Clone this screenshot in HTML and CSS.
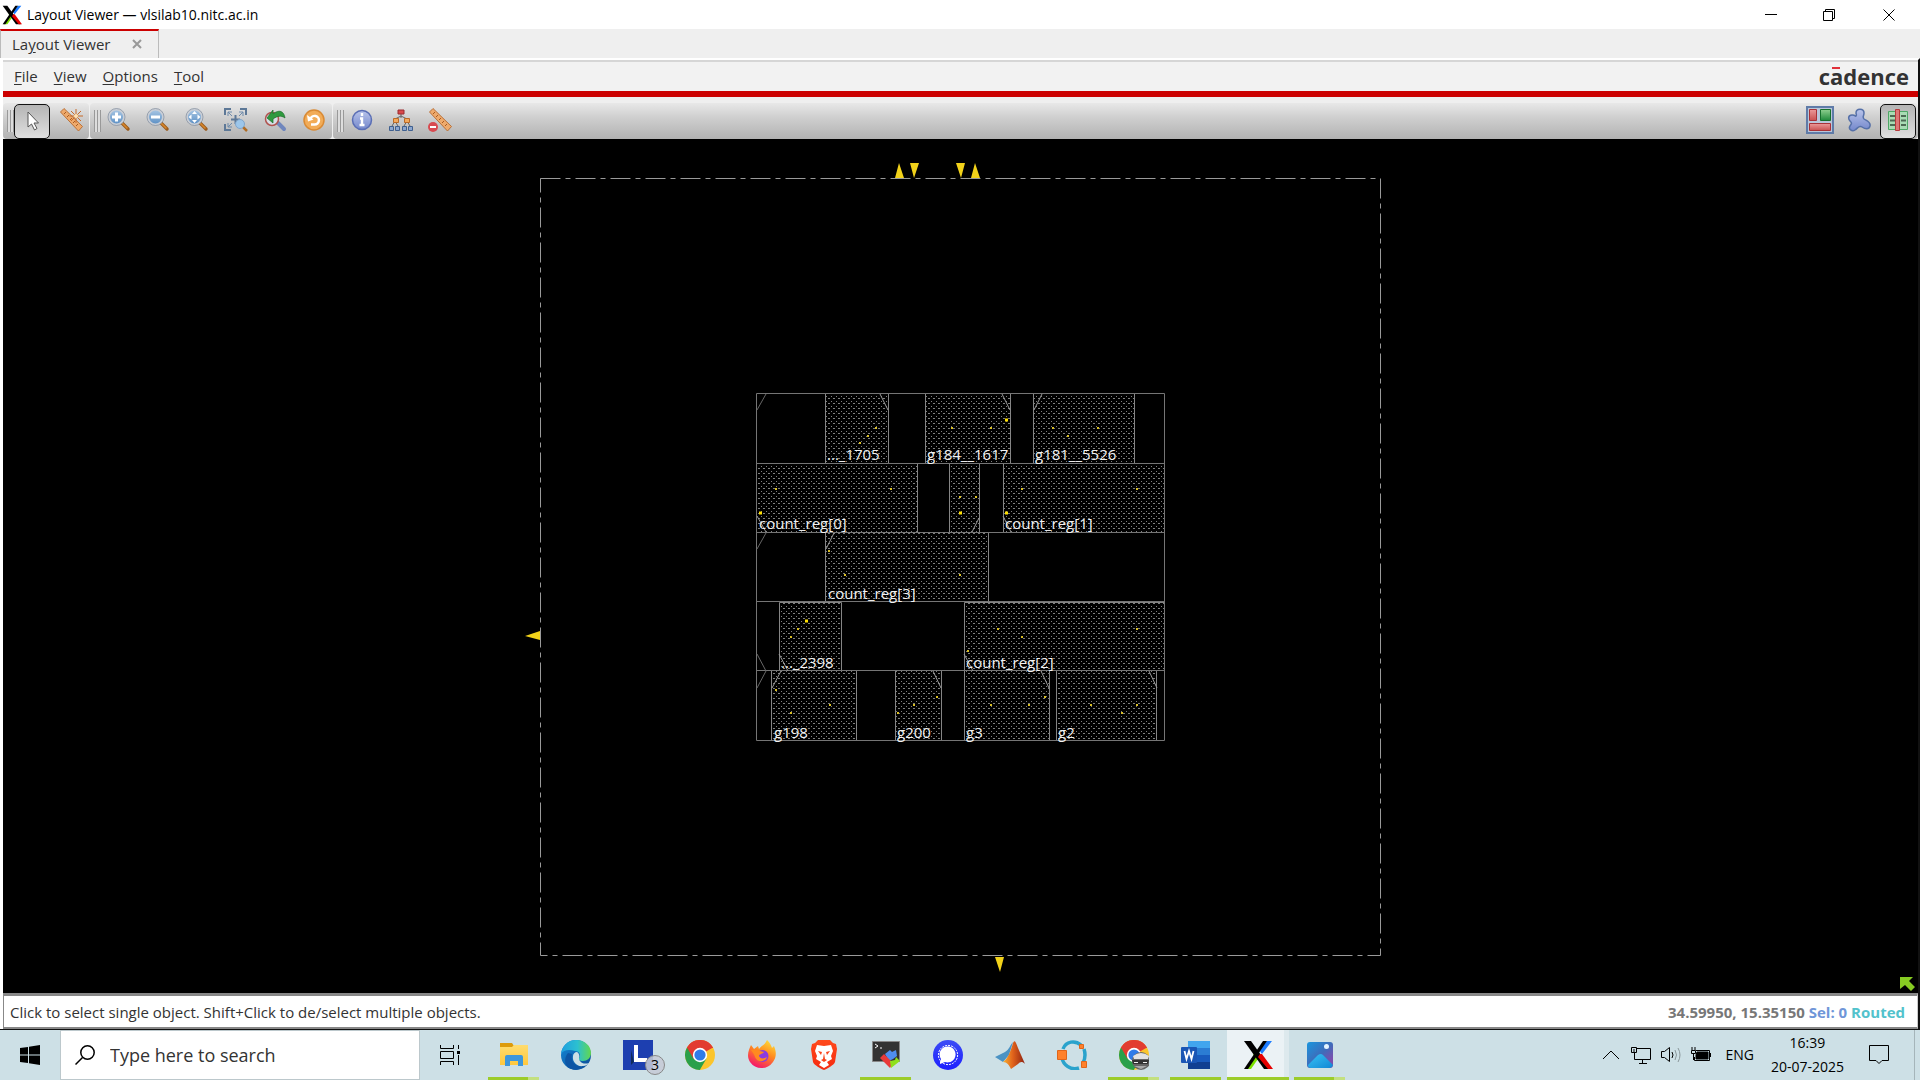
FILE: index.html
```html
<!DOCTYPE html>
<html lang="en">
<head>
<meta charset="utf-8">
<title>Layout Viewer — vlsilab10.nitc.ac.in</title>
<link rel="stylesheet" href="styles.css">
</head>
<body>
<svg class="defs" aria-hidden="true">
  <defs>
    <linearGradient id="lens" x1="0" y1="0" x2="0" y2="1"><stop offset="0" stop-color="#a9c7e4"/><stop offset="1" stop-color="#5b8fc4"/></linearGradient>
    <linearGradient id="blueball" x1="0" y1="0" x2="0" y2="1"><stop offset="0" stop-color="#b9c4ea"/><stop offset="1" stop-color="#7488cc"/></linearGradient>
    <linearGradient id="green" x1="0" y1="0" x2="0" y2="1"><stop offset="0" stop-color="#8fd08f"/><stop offset="1" stop-color="#1f8a3b"/></linearGradient>
    <linearGradient id="red" x1="0" y1="0" x2="0" y2="1"><stop offset="0" stop-color="#eb9a9a"/><stop offset="1" stop-color="#c95050"/></linearGradient>
    <linearGradient id="edgeTop" x1="0" y1="0" x2="1" y2="0"><stop offset="0" stop-color="#1f9fe0"/><stop offset=".55" stop-color="#2cc0d0"/><stop offset="1" stop-color="#62d84e"/></linearGradient>
    <linearGradient id="edgeLow" x1="0" y1="0" x2="1" y2="1"><stop offset="0" stop-color="#1488d8"/><stop offset="1" stop-color="#0c4a94"/></linearGradient>
    <linearGradient id="fox" x1=".8" y1="0" x2=".3" y2="1"><stop offset="0" stop-color="#ffe03a"/><stop offset=".45" stop-color="#ff8a1f"/><stop offset="1" stop-color="#f4126e"/></linearGradient>
    <linearGradient id="brave" x1="0" y1="0" x2="0" y2="1"><stop offset="0" stop-color="#ff4a1c"/><stop offset="1" stop-color="#f52a10"/></linearGradient>
    <linearGradient id="signal" x1="0" y1="0" x2="0" y2="1"><stop offset="0" stop-color="#3c4cf5"/><stop offset="1" stop-color="#1d20ff"/></linearGradient>
    <linearGradient id="matlab" x1="0" y1="0" x2="1" y2="0"><stop offset="0" stop-color="#f7b032"/><stop offset=".45" stop-color="#e0621b"/><stop offset="1" stop-color="#8e2210"/></linearGradient>
    <linearGradient id="photo" x1="0" y1="0" x2="1" y2="1"><stop offset="0" stop-color="#1a96de"/><stop offset=".5" stop-color="#3e6cba"/><stop offset=".8" stop-color="#7a4fae"/></linearGradient>
    <linearGradient id="hill" x1="0" y1="0" x2="1" y2="1"><stop offset="0" stop-color="#37c2f5"/><stop offset="1" stop-color="#1187d4"/></linearGradient>
    <linearGradient id="folder" x1="0" y1="0" x2="0" y2="1"><stop offset="0" stop-color="#ffdc6e"/><stop offset="1" stop-color="#ffc83d"/></linearGradient>
    <symbol id="xlogo" viewBox="0 0 30 30">
      <path d="M24 1h5L19 14l-3-4z" fill="#1c7cff"/>
      <path d="M8 4l6 9-3 4z" fill="#7be000"/>
      <path d="M11 15l4 4-7 10H3z" fill="#7be000"/>
      <path d="M1 1h7l20 28h-7z" fill="#000"/>
      <path d="M17 14h2l11 15h-5L15 17z" fill="#e60000"/>
      <path d="M20 1h4L5 29H1z" fill="#000"/>
    </symbol>
    <symbol id="mag" viewBox="0 0 24 24">
      <path d="M14 14l7 7" stroke="#9a5a1c" stroke-width="3.4" stroke-linecap="round"/>
      <path d="M14 14l6 6" stroke="#d8872c" stroke-width="1.6" stroke-linecap="round"/>
      <circle cx="9.500" cy="9" r="7.500" fill="url(#lens)" stroke="#c9ced6" stroke-width="2"/>
      <circle cx="9.500" cy="9" r="8.500" fill="none" stroke="#7f8b9c" stroke-width=".7"/>
    </symbol>
    <symbol id="ruler" viewBox="0 0 24 24">
      <path d="M1.500 4l3.500-3.500 18.500 18-4 4.500z" fill="#eeaa6c" stroke="#b9713a"/>
      <path d="M7 4l-2 2M10 7l-2 2M13 10l-2 2M16 13l-2 2M19 16l-2 2" stroke="#a85a20"/>
    </symbol>
    <symbol id="chrome" viewBox="0 0 30 30">
      <circle cx="15" cy="15" r="15" fill="#fbc52c"/>
      <path d="M15 15L2 7.500A15 15 0 0 1 28 7.500z" fill="#e23c30"/>
      <path d="M2 7.500A15 15 0 0 0 14.800 30L21.500 18.500 15 15z" fill="#2aa04a"/>
      <path d="M2 7.500l6.500 11.200L15 15V8h13A15 15 0 0 0 2 7.500z" fill="#e23c30"/>
      <circle cx="15" cy="15" r="7.200" fill="#fff"/><circle cx="15" cy="15" r="5.600" fill="#2f7be8"/>
    </symbol>
  </defs>
</svg>

<header class="titlebar">
  <svg class="app-icon" viewBox="0 0 30 30"><use href="#xlogo"/></svg>
  <h1 class="title">Layout Viewer — vlsilab10.nitc.ac.in</h1>
  <div class="window-buttons">
    <button type="button" aria-label="Minimize"><svg viewBox="0 0 12 12"><path d="M0 5.500h12"/></svg></button>
    <button type="button" aria-label="Restore"><svg viewBox="0 0 12 12"><path d="M.5 2.500h9v9h-9zM2.500 2.500v-2h9v9h-2"/></svg></button>
    <button type="button" aria-label="Close"><svg viewBox="0 0 12 12"><path d="M.5.5l11 11M11.500.5l-11 11"/></svg></button>
  </div>
</header>

<div class="tabs">
  <div class="tab"><span>La<u>y</u>out Viewer</span><button type="button" aria-label="Close tab"><svg viewBox="0 0 10 10"><path d="M1 1l8 8M9 1l-8 8"/></svg></button></div>
</div>

<main class="window">
  <div class="menubar">
    <nav class="menus">
      <button type="button"><u>F</u>ile</button>
      <button type="button"><u>V</u>iew</button>
      <button type="button"><u>O</u>ptions</button>
      <button type="button"><u>T</u>ool</button>
    </nav>
    <span class="brand">c<span class="macron">a</span>dence</span>
  </div>

  <div class="toolbar">
    <div class="tool-group">
      <span class="grip"></span>
      <button type="button" class="tool pressed" aria-label="Select"><svg viewBox="0 0 24 24"><path d="M8 4v15l3.500-3 3 6 2.500-1.500-3-5.500h4.500z" fill="#fff" stroke="#555"/></svg></button>
      <button type="button" class="tool" aria-label="Ruler"><svg viewBox="0 0 24 24"><use href="#ruler"/><path d="M17 1v14M10.500 8H24M12 3l10 10M22 3L12 13" stroke="#c76a2a"/><circle cx="17" cy="8" r="2" fill="#ffe2b0"/></svg></button>
    </div>
    <div class="tool-group">
      <span class="grip"></span>
      <button type="button" class="tool" aria-label="Zoom in"><svg viewBox="0 0 24 24"><use href="#mag"/><path d="M9.500 4.500v9M5 9h9" stroke="#fff" stroke-width="3"/></svg></button>
      <button type="button" class="tool" aria-label="Zoom out"><svg viewBox="0 0 24 24"><use href="#mag"/><path d="M5 9h9" stroke="#fff" stroke-width="3"/></svg></button>
      <button type="button" class="tool" aria-label="Zoom fit"><svg viewBox="0 0 24 24"><use href="#mag"/><path d="M9.500 3l2.500 3H7zM9.500 15l2.500-3H7zM3.500 9l3-2.500v5zM15.500 9l-3-2.500v5z" fill="#fff"/></svg></button>
      <button type="button" class="tool" aria-label="Zoom to selected"><svg viewBox="0 0 24 24"><path d="M1 7V1h6M16 1h6v6M1 16v6h6M11.500 7v9M7 11.500h9" fill="none" stroke="#5d7897" stroke-width="2"/><path d="M4 4l4 4M19 4l-4 4M4 19l4-4M4 8V4h4M15 4h4v4M4 15v4h4" fill="none" stroke="#6f8bab"/><path d="M18 18l5 5" stroke="#b06c24" stroke-width="2.500"/><circle cx="16" cy="16" r="4.500" fill="#9cc6ea" stroke="#7fa5cb"/></svg></button>
      <button type="button" class="tool" aria-label="Zoom previous"><svg viewBox="0 0 24 24"><path d="M14 14l7 7" stroke="#6f86bd" stroke-width="4" stroke-linecap="round"/><circle cx="9" cy="11" r="6.500" fill="#d7dee6" stroke="#b0534f" stroke-width="1.500"/><path d="M4 10l6-8v4c6-5 11-3 12 4-4-3-8-2-12 1v4z" fill="#2f9a3f" stroke="#1c6b2a" stroke-width=".7"/></svg></button>
      <button type="button" class="tool" aria-label="Redraw"><svg viewBox="0 0 24 24"><circle cx="12" cy="12" r="10" fill="#f2ac58" stroke="#d98a34" stroke-width="1.500"/><path d="M9 16.500h3.500a4.300 4.300 0 1 0-4-5.500" fill="none" stroke="#fff" stroke-width="2.500"/><path d="M5 7l1 6.500 5.500-2z" fill="#fff"/></svg></button>
    </div>
    <div class="tool-group wide">
      <span class="grip"></span>
      <button type="button" class="tool" aria-label="Attributes"><svg viewBox="0 0 24 24"><circle cx="12" cy="12" r="9.500" fill="url(#blueball)" stroke="#5a6eb5" stroke-width="1.500"/><path d="M12 5v3M10 10.500h2v6M9.500 17h5" stroke="#fff" stroke-width="2.400" fill="none"/></svg></button>
      <button type="button" class="tool" aria-label="Hierarchy"><svg viewBox="0 0 24 24"><path d="M12 5v5M6 11l6-3 6 3M3 18l3-5 3 5M15 18l3-5 3 5" fill="none" stroke="#666"/><path d="M9 2h6v4H9z" fill="#d9494b" stroke="#9a2c30"/><path d="M4.500 10.500h5v4h-5zM15.500 10.500h5v4h-5z" fill="#f2a95c" stroke="#bb6a26"/><path d="M.5 18.500h4v4h-4zM6.500 18.500h4v4h-4zM13.500 18.500h4v4h-4zM19.500 18.500h4v4h-4z" fill="#8ba6cf" stroke="#40608f"/></svg></button>
      <button type="button" class="tool" aria-label="Clear rulers"><svg viewBox="0 0 24 24"><use href="#ruler"/><circle cx="5" cy="19" r="5" fill="#d84a50"/><path d="M2 19h6" stroke="#fff" stroke-width="2"/></svg></button>
      <div class="views">
        <button type="button" class="tool" aria-label="Floorplan view"><svg class="big" viewBox="0 0 28 28"><path d="M1 1h26v26H1z" fill="#b9c6da" stroke="#5f7ba8" stroke-width="2"/><path d="M3.500 3.500h7v11h-7z" fill="url(#red)" stroke="#a83238"/><path d="M14.500 3.500h10v11h-10z" fill="url(#green)" stroke="#16702c"/><path d="M3.500 17.500h21v7h-21z" fill="url(#red)" stroke="#a83238"/></svg></button>
        <button type="button" class="tool" aria-label="Amoeba view"><svg viewBox="0 0 24 24"><path d="M9 5c0-5 8-5 8 0 0 3-2 4 0 6 3 2 7 3 6 7s-5 3-8 1-4 1-7 3-7-1-5-4 2-3 0-5-2-6 2-6 3 2 4 1 0-2 0-3z" fill="url(#blueball)" stroke="#5570a8" stroke-width="1.500"/></svg></button>
        <button type="button" class="tool pressed" aria-label="Physical view"><svg viewBox="0 0 24 24"><path d="M2.500 3.500h19v18h-19z" fill="#a9dcb4" stroke="#4fa766"/><path d="M4 8h5M4 12.500h5M4 17h5M15 8h5M15 12.500h5M15 17h5" stroke="#4d6b54" stroke-width="2"/><path d="M9.500 1.500h4v21h-4z" fill="#dd7777" stroke="#b73a3c"/></svg></button>
      </div>
    </div>
  </div>

  <svg class="canvas" viewBox="3 139 1915 854" role="img" aria-label="Placed cell layout">
    <defs>
      <pattern id="stipple" width="5" height="5" patternUnits="userSpaceOnUse"><path d="M1 1h1v1H1zM3 3h2v1H3z" fill="#808080"/></pattern>
    </defs>
    <rect class="die" x="540.500" y="178.500" width="840" height="777"/>
    <path class="port" d="M895 178l4-15 5 15zM910 163h9l-5 15zM956 163h9l-4 15zM971 178l4-15 5 15zM525 636l15-5v9zM995 957h9l-4 15z"/>
    <path class="cell" d="M825.500 393.500h63v70h-63zM925.500 393.500h85v70h-85zM1033.500 393.500h101v70h-101z
      M756.500 463.500h161v69h-161zM949.500 463.500h30v69h-30zM1003.500 463.500h161v69h-161z
      M825.500 532.500h163v69h-163z
      M779.500 602.500h62v68h-62zM964.500 602.500h200v68h-200z
      M771.500 670.500h85v70h-85zM895.500 670.500h46v70h-46zM964.500 670.500h85v70h-85zM1056.500 670.500h100v70h-100z"/>
    <path class="row" d="M756.500 393.500h408v347h-408zM756 463.500h408M756 532.500h408M756 601.500h408M756 670.500h408"/>
    <path class="mark dim" d="M757 410l9-16M766 533l-9 16M757 654l9 17-9 17"/>
    <path class="mark" d="M880 394l8 16M1002 394l8 16M1042 394l-8 16M757 516l9 16M979 518l-7 14M1003 516l8 16M834 533l-8 16M779 654l9 17M964 654l9 17M781 671l-9 17M933 671l8 17M1041 671l8 17M1149 671l8 17"/>
    <path class="pin" d="M859 443h2M867 436h2M875 428h2M951 428h2M990 428h2M1052 428h2M1067 436h2M1097 428h2M775 489h2M890 489h2M959 497h2M975 497h2M1021 489h2M1136 489h2M828 551h2M844 575h2M959 575h2M797 629h2M790 637h2M997 629h2M1021 637h2M1136 629h2M967 651h2M775 690h2M829 705h2M790 713h2M936 697h2M913 705h2M897 713h2M1044 697h2M990 705h2M1028 705h2M1090 705h2M1136 705h2M1121 713h2"/>
    <path class="pin large" d="M1005 420h3M759 513h3M959 513h3M1005 513h3M805 621h3"/>
    <g class="labels">
      <text x="827" y="460">..._1705</text><text x="927" y="460">g184__1617</text><text x="1035" y="460">g181__5526</text>
      <text x="759" y="529">count_reg[0]</text><text x="1005" y="529">count_reg[1]</text>
      <text x="828" y="599">count_reg[3]</text>
      <text x="781" y="668">..._2398</text><text x="966" y="668">count_reg[2]</text>
      <text x="774" y="738">g198</text><text x="897" y="738">g200</text><text x="966" y="738">g3</text><text x="1058" y="738">g2</text>
    </g>
    <path class="corner" d="M1900 977h13l-4 4 6 6-4 4-6-6-5 4z"/>
  </svg>

  <footer class="status">
    <span>Click to select single object. Shift+Click to de/select multiple objects.</span>
    <strong class="coords">34.59950, 15.35150 <span class="sel">Sel: 0</span> <span class="routed">Routed</span></strong>
  </footer>
</main>

<div class="taskbar">
  <button type="button" class="start" aria-label="Start"><svg viewBox="0 0 20 20"><path d="M0 3l8-1v7.500H0zM9 1.800L20 0v9.500H9zM0 10.500h8V18l-8-1zM9 10.500h11V20L9 18.200z"/></svg></button>
  <label class="search"><svg viewBox="0 0 20 20"><circle cx="12.500" cy="7.500" r="6.700"/><path d="M7.500 12.500L.5 19.500"/></svg><input type="text" placeholder="Type here to search" aria-label="Search"></label>
  <div class="apps">
    <button type="button" class="view" aria-label="Task view"><svg viewBox="0 0 20 20"><path d="M.5 0v3.500h13V0M.5 20v-3.500h13V20M.5 6.500h13v7H.5zM18.500 0v4M18.500 10v10" fill="none" stroke="#000"/><path d="M17 6h3v3h-3z"/></svg></button>
    <button type="button" class="app open many" aria-label="File Explorer"><svg viewBox="0 0 30 30"><path d="M1 3h12l2 3-2 3H1z" fill="#dd9b0c"/><path d="M1 7h12l2-2h14v20H1z" fill="url(#folder)"/><path d="M6 26V17q0-2 2-2h14q2 0 2 2v9h-5v-5h-8v5z" fill="#3d97dc"/></svg></button>
    <button type="button" class="app" aria-label="Edge"><svg viewBox="0 0 30 30"><circle cx="15" cy="15" r="15" fill="url(#edgeLow)"/><path d="M0 14C1 6 7 0 15 0c9 0 15 6 15 13 0 5-4 8-8 8-3 0-5-1-4-3 2-2 1-7-4-7C8 9 2 10 0 14z" fill="url(#edgeTop)"/><path d="M12 16c-1 6 4 11 10 10 3 0 5-2 6-3-3 1-7 1-9-2-1-1-1-2-1-3 1-2 0-5-2-6-2 0-4 2-4 4z" fill="#cde0e6"/><path d="M11 14c-2 8 4 14 11 13-3 3-9 4-14 1S3 18 7 13z" fill="#0d55a5"/></svg></button>
    <button type="button" class="app" aria-label="LogMeIn"><svg viewBox="0 0 30 30"><path d="M0 0h30v30H0z" fill="#1d3fb0"/><path d="M11 22l-3 3V10z" fill="#0f2b5c"/><path d="M11 5h4v13h9v4H11z" fill="#fff"/></svg><span class="badge">3</span></button>
    <button type="button" class="app" aria-label="Chrome"><svg viewBox="0 0 30 30"><use href="#chrome"/></svg></button>
    <button type="button" class="app" aria-label="Firefox"><svg viewBox="0 0 30 30"><path d="M4 5l3 4 4-3 1 3c2-3 6-4 8-9 3 3 4 5 5 8l2-2c3 7 2 12-1 16a14 14 0 0 1-23 0C-1 16 2 9 4 5z" fill="url(#fox)"/><circle cx="15.500" cy="16" r="6" fill="#8a3be0"/><path d="M4 10c4-2 7 0 9 1l4 1c-1 2-5 2-5 4 1 3 5 3 8 1-1 5-10 6-12 0-1-3-2-4-4-7z" fill="#ff8a20"/></svg></button>
    <button type="button" class="app" aria-label="Brave"><svg viewBox="0 0 30 30"><path d="M9 0h12l3 3 3 1 1 5-2 13c-1 3-8 7-11 8-3-1-10-5-11-8L2 9l1-5 3-1z" fill="url(#brave)"/><path d="M8 5l7 1 7-1 2 6-2 5 1 3-5 3 2 3-5 3-5-3 2-3-5-3 1-3-2-5z" fill="#fff"/><path d="M9 11l4 1-1 3zM21 11l-4 1 1 3zM15 13l1 6 2 1-3 2-3-2 2-1z" fill="#f9431a"/></svg></button>
    <button type="button" class="app open" aria-label="MobaXterm"><svg viewBox="0 0 30 30"><path d="M1.500 1.500h27v20h-27z" fill="#333" stroke="#888"/><path d="M4 4l3 2-3 2M9 8h2" fill="none" stroke="#fff"/><path d="M14 14l5-4 2 2 4-2 1 6-4 3-4 2z" fill="#4f8ef0"/><path d="M9 18l4-4 9 9-3 5z" fill="#e83a3a"/><path d="M20 28l-1-7 5-1 1-3 4 4z" fill="#8fe01c"/></svg></button>
    <button type="button" class="app" aria-label="Signal"><svg viewBox="0 0 30 30"><circle cx="15" cy="15" r="15" fill="url(#signal)"/><circle cx="15" cy="15" r="9.600" fill="none" stroke="#fff" stroke-dasharray="2 1"/><path d="M7 22l1-3a8 8 0 1 1 4 3l-5 2z" fill="#fff"/></svg></button>
    <button type="button" class="app" aria-label="MATLAB"><svg viewBox="0 0 30 30"><path d="M0 17l10-5c4-2 5-7 8-10l-4 13-6 7z" fill="#4b93c4"/><path d="M8 22c5-3 8-12 10-19 2-4 3 0 5 5l7 16c-3-3-5-2-7 0l-7 5c-2-4-4-7-8-7z" fill="url(#matlab)"/></svg></button>
    <button type="button" class="app" aria-label="Octave"><svg viewBox="0 0 30 30"><path d="M6 9C9 1 18 0 24 5M27 9c2 6 1 10-1 14M22 28C13 31 6 24 5 18" fill="none" stroke="#2aa3cc" stroke-width="3.500"/><path d="M.5 10.500h9v9h-9zM22.500 4.500h4v4h-4zM24.500 21.500h5v6h-5z" fill="#ff812b" stroke="#e0661a"/></svg></button>
    <button type="button" class="app open many" aria-label="Chrome profile"><svg viewBox="0 0 30 30"><use href="#chrome"/><circle cx="22" cy="21" r="9" fill="#666"/><path d="M14 16q8-6 16 0l-1 3H15z" fill="#e2e2e2"/><path d="M13 20h17l-1 4H14z" fill="#333"/><path d="M15 22h4v1h-4zM24 22h4v1h-4z" fill="#eee"/><path d="M15 26h13l-6 3z" fill="#aaa"/></svg></button>
    <button type="button" class="app open" aria-label="Word"><svg viewBox="0 0 30 30"><path d="M7 1h22v8H7z" fill="#41a5ee"/><path d="M7 8h22v7H7z" fill="#2b7cd3"/><path d="M7 15h22v7H7z" fill="#185abd"/><path d="M7 22h22v7H7z" fill="#103f91"/><rect x="0" y="7" width="16" height="16" rx="1" fill="#1a56b5"/><path d="M3.500 11l2 8 2.500-8 2.500 8 2-8" fill="none" stroke="#fff" stroke-width="1.800"/></svg></button>
    <button type="button" class="app open active" aria-label="Layout Viewer"><svg viewBox="0 0 30 30"><use href="#xlogo"/></svg></button>
    <button type="button" class="app open many" aria-label="Photos"><svg viewBox="0 0 30 30"><rect x="2" y="2" width="26" height="26" rx="3" fill="url(#photo)"/><path d="M3 25l10-10q3-2 5 0l10 10q-1 3-4 3H6q-3 0-3-3z" fill="url(#hill)"/><circle cx="21.500" cy="6.500" r="2.500" fill="#e4f4ff"/></svg></button>
  </div>
  <div class="tray">
    <button type="button" aria-label="Show hidden icons"><svg viewBox="0 0 20 20"><path d="M2 14l8-8 8 8"/></svg></button>
    <button type="button" aria-label="Network"><svg viewBox="0 0 20 20"><path d="M6 3.500h13.500v11H3.500V8M8 18.500h8M11.500 15v3M.5 2.500h5v5h-5zM3 4v4"/></svg></button>
    <button type="button" aria-label="Volume"><svg viewBox="0 0 20 20"><path d="M.5 6.500h3l5-4v14l-5-4h-3zM11 7q2 3 0 6"/><path d="M14 5q3 5 0 10M17 3q4 7 0 14" stroke="#8a979b"/></svg></button>
    <button type="button" aria-label="Battery"><svg viewBox="0 0 20 20"><path d="M5 5.500h13.500v10H3.500V12M19.500 8v4M1 2v3M4 2v3M.5 5.500h4v3h-4zM2.500 9v6"/><path d="M6 7h11v7H5V10z" fill="#000"/></svg></button>
    <button type="button" class="lang">ENG</button>
    <button type="button" class="clock"><time>16:39</time><span>20-07-2025</span></button>
    <button type="button" aria-label="Notifications"><svg viewBox="0 0 20 20"><path d="M.5.5h19v15H13l-3 3-3-3H.5z"/></svg></button>
  </div>
</div>
</body>
</html>
```
FILE: styles.css
```css
* { box-sizing: border-box; }
body {
  margin: 0;
  min-height: 100vh;
  display: flex;
  flex-direction: column;
  background: #fff;
  color: #333;
  font: 15px/20px "Open Sans", "Noto Sans", sans-serif;
}
button {
  margin: 0;
  padding: 0;
  border: 0;
  background: none;
  color: inherit;
  font: inherit;
}
svg { display: block; fill: none; }
.defs { position: absolute; width: 0; height: 0; }
u { text-underline-offset: 2px; }

.titlebar { display: flex; align-items: center; height: 29px; padding-left: 2px; color: #000; }
.app-icon { width: 20px; height: 20px; }
.title { margin: 0 0 0 5px; font-size: 14px; font-weight: 400; line-height: 20px; }
.window-buttons { display: flex; margin-left: auto; }
.window-buttons button { display: grid; place-items: center; width: 58px; height: 29px; }
.window-buttons button:last-child { width: 62px; }
.window-buttons svg { width: 12px; height: 12px; stroke: #000; }

.tabs { display: flex; height: 29px; background: #efefef; }
.tab {
  display: flex;
  align-items: center;
  gap: 22px;
  padding: 0 16px 2px 11px;
  border: 1px solid #bbb;
  border-top: 2px solid #c00;
  border-bottom: 0;
}
.tab svg { width: 10px; height: 10px; stroke: #999; stroke-width: 2; }

.window {
  flex: 1;
  display: flex;
  flex-direction: column;
  padding-left: 3px;
  border-top: 2px solid #fff;
  border-right: 2px solid #111;
  border-bottom: 1px solid #111;
}
.menubar {
  display: flex;
  justify-content: space-between;
  align-items: center;
  height: 37px;
  padding: 0 9px 1px 11px;
  border-top: 2px solid #d6d6d6;
  border-bottom: 6px solid #c00;
  background: #f2f2f2;
}
.menus { display: flex; gap: 16px; }
.brand { color: #333; font-size: 22px; font-weight: 700; line-height: 28px; }
.macron { position: relative; }
.macron::before { content: ""; position: absolute; left: 2px; top: 6px; width: 8px; height: 2px; background: #e0303a; }

.toolbar { display: flex; gap: 1px; height: 42px; padding-top: 6px; background: #efefef; }
.tool-group {
  display: flex;
  align-items: center;
  gap: 3px;
  padding-left: 4px;
  border-radius: 4px;
  background: linear-gradient(#e8e8e8, #cfcfcf 40%, #b2b2b2);
}
.wide { flex: 1; padding-right: 2px; }
.grip { width: 7px; height: 22px; margin-right: -3px; background: repeating-linear-gradient(90deg, #999 0 1px, #ddd 1px 3px); }
.tool { display: grid; place-items: center; width: 36px; height: 35px; padding-bottom: 3px; }
.tool svg { width: 24px; height: 24px; }
.tool .big { width: 28px; height: 28px; }
.pressed { border: 1px solid #111; border-radius: 5px; background: linear-gradient(#b4b4b4, #e0e0e0); }
.views { display: flex; gap: 3px; margin-left: auto; }

.canvas { flex: 1; width: 100%; min-height: 0; background: #000; }
.die { stroke: #9a9a9a; stroke-dasharray: 20 5 5 5; }
.port, .pin { fill: #f2d21a; }
.cell { fill: url(#stipple); stroke: #858585; }
.row { stroke: #757575; }
.mark { stroke: #999; }
.dim { stroke: #666; }
.pin { stroke: #d8bd20; stroke-width: 2; }
.large { stroke: #ffe000; stroke-width: 3; }
.labels { fill: #f2f2f2; font-size: 15px; }
.corner { fill: #86cc22; }

.status {
  display: flex;
  justify-content: space-between;
  align-items: center;
  height: 36px;
  padding: 0 12px 0 6px;
  border: solid #888;
  border-width: 3px 1px 2px;
  border-right-color: #ccc;
  background: #fff;
}
.coords { color: #777; }
.sel { color: #6f96d8; }
.routed { color: #52c2cc; }

.taskbar { display: flex; height: 50px; background: #cde0e6; color: #000; }
.start { display: grid; place-items: center; width: 60px; }
.start svg { width: 20px; height: 20px; fill: #000; }
.search { display: flex; align-items: center; gap: 15px; width: 360px; padding: 0 14px; border: 1px solid #bcc8cc; background: #fff; }
.search svg { flex: none; width: 20px; height: 20px; stroke: #000; stroke-width: 1.5; }
.search input { flex: 1; min-width: 0; padding: 0; border: 0; outline: 0; background: none; font: 18px/24px "Open Sans", "Noto Sans", sans-serif; }
.search input::placeholder { color: #333; opacity: 1; }
.apps { display: flex; }
.app, .view { position: relative; display: grid; place-items: center; width: 62px; }
.view { width: 60px; margin-right: 3px; }
.view svg { width: 20px; height: 20px; fill: #000; }
.app svg { width: 30px; height: 30px; }
.open::after { content: ""; position: absolute; left: 5px; right: 6px; bottom: 0; height: 3px; background: #9ccc2a; }
.many::after { background: linear-gradient(90deg, #9ccc2a 40px, #c3e07f 40px); }
.active { background: linear-gradient(90deg, #ebf2f5 57px, #dde9ed 57px); }
.active::after { left: 0; right: 0; }
.badge {
  position: absolute;
  right: 4px;
  bottom: 5px;
  width: 20px;
  height: 20px;
  border: 1px solid #888;
  border-radius: 50%;
  background: #c5cad6dd;
  font-size: 14px;
  line-height: 18px;
  text-align: center;
}
.tray { display: flex; align-items: center; gap: 10px; margin-left: auto; margin-right: 5px; padding-right: 25px; border-right: 1px solid #a5b5ba; }
.tray svg { width: 20px; height: 20px; stroke: #000; }
.lang { margin: 0 7px 0 4px; font-size: 14px; }
.clock { display: grid; gap: 4px; margin-right: 15px; font-size: 14px; text-align: center; }
```
